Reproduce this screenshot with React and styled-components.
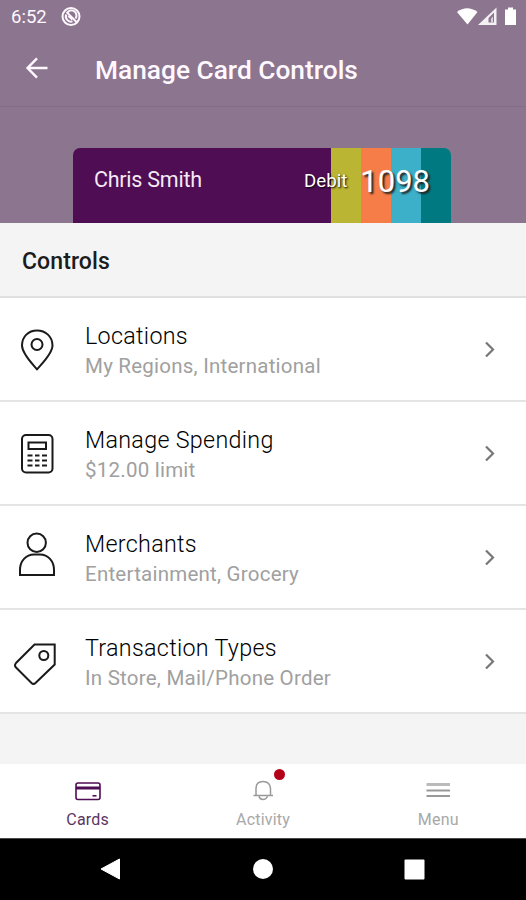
import React from "react";
import styled, { createGlobalStyle } from "styled-components";

const GlobalStyle = createGlobalStyle`
  * {
    box-sizing: border-box;
  }

  body {
    margin: 0;
    background: #f4f4f4;
    font-family: Roboto, "Liberation Sans", sans-serif;
  }

  svg {
    display: block;
    flex: none;
  }
`;

const Screen = styled.div`
  width: 526px;
  height: 900px;
  display: flex;
  flex-direction: column;
  overflow: hidden;
  background: #f4f4f4;
`;

const Header = styled.header`
  height: 223px;
  flex: none;
  display: flex;
  flex-direction: column;
  background: #8c758f;
  color: #fff8ff;
`;

const StatusBar = styled.div`
  height: 34px;
  display: flex;
  align-items: center;
  padding: 0 10px 0 11px;
  font-size: 18.5px;
`;

const Clock = styled.span`
  width: 50px;
`;

const StatusIcons = styled.div`
  margin-left: auto;
  display: flex;
`;

const AppBar = styled.div`
  height: 73px;
  display: flex;
  align-items: center;
  padding: 0 25px;
  border-bottom: 1px solid #836c87;

  svg {
    margin-top: -4px;
  }
`;

const Title = styled.h1`
  margin: 0 0 0 46px;
  font-size: 26.3px;
  font-weight: 500;
  line-height: 30px;
`;

const CardWrap = styled.div`
  flex: 1;
  display: flex;
  align-items: flex-end;
  padding: 0 75px 0 73px;
`;

const Card = styled.div`
  width: 378px;
  height: 75px;
  display: flex;
  padding: 0 21px;
  border-radius: 7px 7px 0 0;
  color: #fff;
  background: linear-gradient(
    to right,
    #4f0d54 258px,
    #bab532 258px 288px,
    #f67d48 288px 318px,
    #3cb0c9 318px 348px,
    #007a80 348px
  );
`;

const CardName = styled.span`
  flex: 1;
  margin-top: 19px;
  font-size: 21.5px;
  line-height: 26px;
  letter-spacing: -0.25px;
  color: #f4e9f4;
`;

const CardType = styled.span`
  margin: 21px 13px 0 0;
  font-size: 18.7px;
  line-height: 24px;
  text-shadow: 1px 1px 2px #000;
`;

const CardNumber = styled.span`
  margin-top: 15px;
  font-size: 31px;
  line-height: 38px;
  text-shadow: 2px 2px 2px #222;
`;

const SectionTitle = styled.h2`
  height: 75px;
  flex: none;
  margin: 0;
  padding-left: 22px;
  border-bottom: 2px solid #e0e0e0;
  font-size: 23px;
  font-weight: 500;
  line-height: 78px;
  letter-spacing: 0.1px;
  color: #1c1c1c;
`;

const Row = styled.div`
  height: 104px;
  flex: none;
  display: flex;
  align-items: center;
  padding: 0 26px 0 12px;
  border-bottom: 2px solid #e4e4e4;
  background: #fff;
`;

const RowText = styled.div`
  flex: 1;
  margin: 4px 0 0 23px;
`;

const RowTitle = styled.div`
  font-size: 23.3px;
  font-weight: 300;
  line-height: 30px;
  letter-spacing: 0.3px;
  color: #000;
`;

const RowDetail = styled.div`
  font-size: 20.5px;
  line-height: 30px;
  letter-spacing: 0.23px;
  color: #a0a0a0;
`;

const TabBar = styled.nav`
  height: 74px;
  flex: none;
  margin-top: auto;
  display: flex;
  background: #fff;
`;

const Tab = styled.div`
  flex: 1;
  display: flex;
  flex-direction: column;
  align-items: center;
  padding-top: 12px;
  font-size: 16px;
  line-height: 23px;
  letter-spacing: 0.2px;
  color: ${(props) => (props.$active ? "#5b3563" : "#a8a8a8")};
`;

const TabIcon = styled.div`
  position: relative;
  height: 32px;
`;

const Badge = styled.span`
  position: absolute;
  top: -7px;
  left: 25px;
  width: 11px;
  height: 11px;
  border-radius: 50%;
  background: #b5001a;
`;

const SystemNav = styled.div`
  height: 62px;
  flex: none;
  display: flex;
  align-items: center;
  justify-content: space-between;
  padding: 0 101px 1px 100px;
  border-top: 1px solid #4a4a4a;
  background: #000;
`;

const IconBox = ({ children }) => (
  <svg
    width="50"
    height="50"
    viewBox="0 0 50 50"
    fill="none"
    stroke="#1a1a1a"
    strokeWidth="2"
    strokeLinejoin="round"
  >
    {children}
  </svg>
);

const PinIcon = () => (
  <IconBox>
    <path d="M25 45.500C22 41.500 10 30 10 21.500C10 12.500 16.500 6.500 25 6.500S40.500 12.500 40.500 21.500C40.500 30 28 41.500 25 45.500Z" />
    <circle cx="25" cy="20.500" r="5.500" />
  </IconBox>
);

const CalculatorIcon = () => (
  <IconBox>
    <rect x="10" y="7" width="30.500" height="37.500" rx="4" />
    <rect x="16.500" y="14.500" width="17.500" height="6.500" strokeLinejoin="miter" />
    <path d="M15.500 27.500h5m2.500 0h4.500m2.500 0h5M15.500 32.500h5m2.500 0h4.500m2.500 0h5M15.500 37.500h5m2.500 0h4.500m2.500 0h5" />
  </IconBox>
);

const PersonIcon = () => (
  <IconBox>
    <circle cx="24.700" cy="10.700" r="9.200" />
    <path d="M8 43V38C8 29 14 22.500 22 22.500h6C36 22.500 42 29 42 38v5z" strokeLinejoin="miter" />
  </IconBox>
);

const TagIcon = () => (
  <IconBox>
    <path d="M22.500 8.500H42.700V28.500L23.500 47Q21.500 48.800 19.500 47L4 31.500Q2 29.500 4 27Z" strokeLinejoin="miter" />
    <circle cx="31.800" cy="19.500" r="4.500" />
  </IconBox>
);

const Chevron = () => (
  <svg width="16" height="20" viewBox="0 0 16 20" fill="none" stroke="#777" strokeWidth="2.200">
    <path d="M2 3.500l7 7-7 7" />
  </svg>
);

const controls = [
  { title: "Locations", detail: "My Regions, International", Icon: PinIcon },
  { title: "Manage Spending", detail: "$12.00 limit", Icon: CalculatorIcon },
  { title: "Merchants", detail: "Entertainment, Grocery", Icon: PersonIcon },
  { title: "Transaction Types", detail: "In Store, Mail/Phone Order", Icon: TagIcon },
];

const App = () => {
  return (
    <Screen>
      <GlobalStyle />
      <Header>
        <StatusBar>
          <Clock>6:52</Clock>
          <svg width="20" height="20" viewBox="0 0 20 20" fill="none" stroke="#fff8ff" strokeWidth="2">
            <circle cx="10" cy="9.500" r="8.500" />
            <path d="M6.500 5.500A5 5 0 0 1 14.500 11.500M5.300 7.500A5 5 0 0 0 11.500 14.300" />
            <path d="M5.500 5L15.500 15" />
            <path d="M7.500 8.800l4 3.500" strokeWidth="2.500" />
          </svg>
          <StatusIcons>
            <svg width="59" height="20" viewBox="0 0 59 20" fill="#fff">
              <path d="M0 5Q10 -2.500 20.500 5L10.500 17.500Z" />
              <path d="M21 18L39.500 .500V18Z" opacity=".9" />
              <path d="M31.500 15.500V11L37 5.500V15.500Z" fill="#8c758f" />
              <path d="M34 15.500v-4l2-2v6z" fill="#ddd0df" />
              <path d="M48 2.500h3V.500h5v2h3V18H48Z" />
            </svg>
          </StatusIcons>
        </StatusBar>
        <AppBar>
          <svg width="24" height="24" viewBox="0 0 24 24" fill="none" stroke="#fff8ff" strokeWidth="2.400">
            <path d="M22.500 12H3M12 2.300L2.500 12l9.500 9.700" />
          </svg>
          <Title>Manage Card Controls</Title>
        </AppBar>
        <CardWrap>
          <Card>
            <CardName>Chris Smith</CardName>
            <CardType>Debit</CardType>
            <CardNumber>1098</CardNumber>
          </Card>
        </CardWrap>
      </Header>
      <SectionTitle>Controls</SectionTitle>
      {controls.map(({ title, detail, Icon }) => (
        <Row key={title}>
          <Icon />
          <RowText>
            <RowTitle>{title}</RowTitle>
            <RowDetail>{detail}</RowDetail>
          </RowText>
          <Chevron />
        </Row>
      ))}
      <TabBar>
        <Tab $active>
          <TabIcon>
            <svg width="28" height="32" viewBox="0 0 28 32" fill="none" stroke="#4f0d54" strokeWidth="1.600">
              <rect x="2" y="7" width="24" height="16.500" rx="2" />
              <path d="M2 12h24" strokeWidth="3" />
              <path d="M18.500 19.800h4" />
            </svg>
          </TabIcon>
          Cards
        </Tab>
        <Tab>
          <TabIcon>
            <svg width="28" height="32" viewBox="0 0 28 32" fill="none" stroke="#999" strokeWidth="1.500">
              <path d="M4.500 19.500h19.500M7 19.500V12.500Q7 5.500 14 5.500T21.500 12.500v7M10 20.500Q11 23.500 14 23.500T18.500 20.500" />
            </svg>
            <Badge />
          </TabIcon>
          Activity
        </Tab>
        <Tab>
          <TabIcon>
            <svg width="28" height="32" viewBox="0 0 28 32" fill="none" stroke="#999" strokeWidth="2">
              <path d="M2.500 8.500h23.500" stroke="#bbb" strokeWidth="3" />
              <path d="M2.500 14.500h23.500M2.500 20h23.500" />
            </svg>
          </TabIcon>
          Menu
        </Tab>
      </TabBar>
      <SystemNav>
        <svg width="22" height="22" viewBox="0 0 22 22" fill="#fff">
          <path d="M1 11L19.500 1V21Z" stroke="#fff" strokeLinejoin="round" />
        </svg>
        <svg width="20" height="20" viewBox="0 0 20 20" fill="#fff">
          <circle cx="10" cy="10" r="10" />
        </svg>
        <svg width="21" height="21" viewBox="0 0 21 21" fill="#fff">
          <rect x=".500" y=".500" width="20" height="20" rx="1" />
        </svg>
      </SystemNav>
    </Screen>
  );
};

export default App;
